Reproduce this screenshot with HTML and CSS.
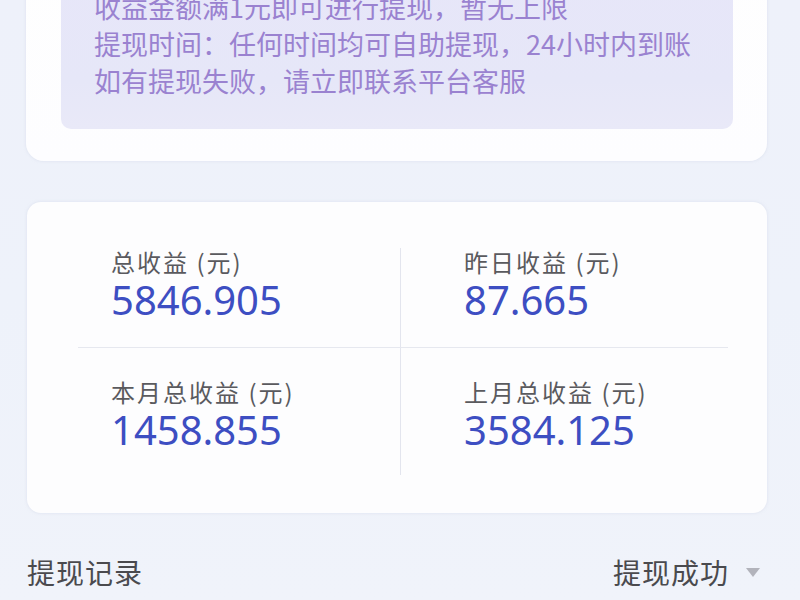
FILE: index.html
```html
<!DOCTYPE html>
<html lang="zh-CN">
<head>
<meta charset="utf-8">
<title>收益</title>
<link rel="stylesheet" href="styles.css">
</head>
<body>
<div class="page">
  <section class="card notice-card">
    <div class="notice">
      <p>收益金额满1元即可进行提现，暂无上限</p>
      <p>提现时间：任何时间均可自助提现，24小时内到账</p>
      <p>如有提现失败，请立即联系平台客服</p>
    </div>
  </section>

  <section class="card stats-card">
    <div class="stats">
      <div class="cell cell-left row-top">
        <div class="label">总收益 (元)</div>
        <div class="value">5846.905</div>
      </div>
      <div class="cell cell-right row-top">
        <div class="label">昨日收益 (元)</div>
        <div class="value">87.665</div>
      </div>
      <div class="cell cell-left row-bottom">
        <div class="label">本月总收益 (元)</div>
        <div class="value">1458.855</div>
      </div>
      <div class="cell cell-right row-bottom">
        <div class="label">上月总收益 (元)</div>
        <div class="value">3584.125</div>
      </div>
    </div>
  </section>

  <div class="records">
    <span class="records-title">提现记录</span>
    <span class="filter">提现成功<span class="caret"></span></span>
  </div>
</div>
</body>
</html>
```
FILE: styles.css
```css
html, body {
  margin: 0;
  padding: 0;
}
body {
  width: 800px;
  height: 600px;
  overflow: hidden;
  background: linear-gradient(180deg, #eef1fa 0%, #eef2fa 50%, #f0f3fa 100%);
  font-family: "Noto Sans CJK SC", "Noto Sans", sans-serif;
}
.page {
  margin: -66px 33px 0 26px;
}
.card {
  background: #fdfdfe;
  border-radius: 18px;
  box-shadow: 0 0 3px rgba(200, 205, 225, 0.5);
}
.notice-card {
  padding: 34px 34px 32px 35px;
  background: linear-gradient(180deg, #fefefe, #fdfdff);
}
.notice {
  background: linear-gradient(180deg, #e7e6f9 0%, #e6e7f8 70%, #e9e9f8 100%);
  border-radius: 10px;
  padding: 20px 20px 30px 33px;
}
.notice p {
  margin: 0;
  font-size: 27px;
  line-height: 37px;
  color: #9a82d0;
}
.stats-card {
  margin-top: 41px;
  margin-left: 1px;
  border-radius: 14px;
  padding: 46px 39px 38px 51px;
}
.stats {
  display: grid;
  grid-template-columns: 323px 1fr;
}
.cell {
  display: flex;
  flex-direction: column;
  gap: 2px;
}
.cell-left {
  padding-left: 33px;
  border-right: 1.5px solid #e3e5ee;
}
.cell-right {
  padding-left: 63px;
}
.row-top {
  padding-bottom: 25px;
  border-bottom: 1.5px solid #e6e8ef;
}
.row-bottom {
  padding-top: 30px;
  padding-bottom: 23px;
}
.label {
  font-size: 24px;
  line-height: 28px;
  letter-spacing: 2px;
  color: #5a5a5e;
}
.value {
  font-family: "Noto Sans", sans-serif;
  font-size: 40px;
  line-height: 44px;
  color: #3d4ec2;
}
.records {
  margin-top: 39px;
  margin-left: 1px;
  display: flex;
  justify-content: space-between;
  align-items: center;
  height: 40px;
}
.records-title {
  font-size: 28px;
  letter-spacing: 1px;
  color: #4a4a4e;
}
.filter {
  display: flex;
  align-items: center;
  font-size: 28px;
  letter-spacing: 1px;
  color: #4a4a4e;
}
.caret {
  width: 0;
  height: 0;
  margin-left: 17px;
  margin-right: 7px;
  border-left: 7px solid transparent;
  border-right: 7px solid transparent;
  border-top: 9px solid #b2b3bb;
}
```
